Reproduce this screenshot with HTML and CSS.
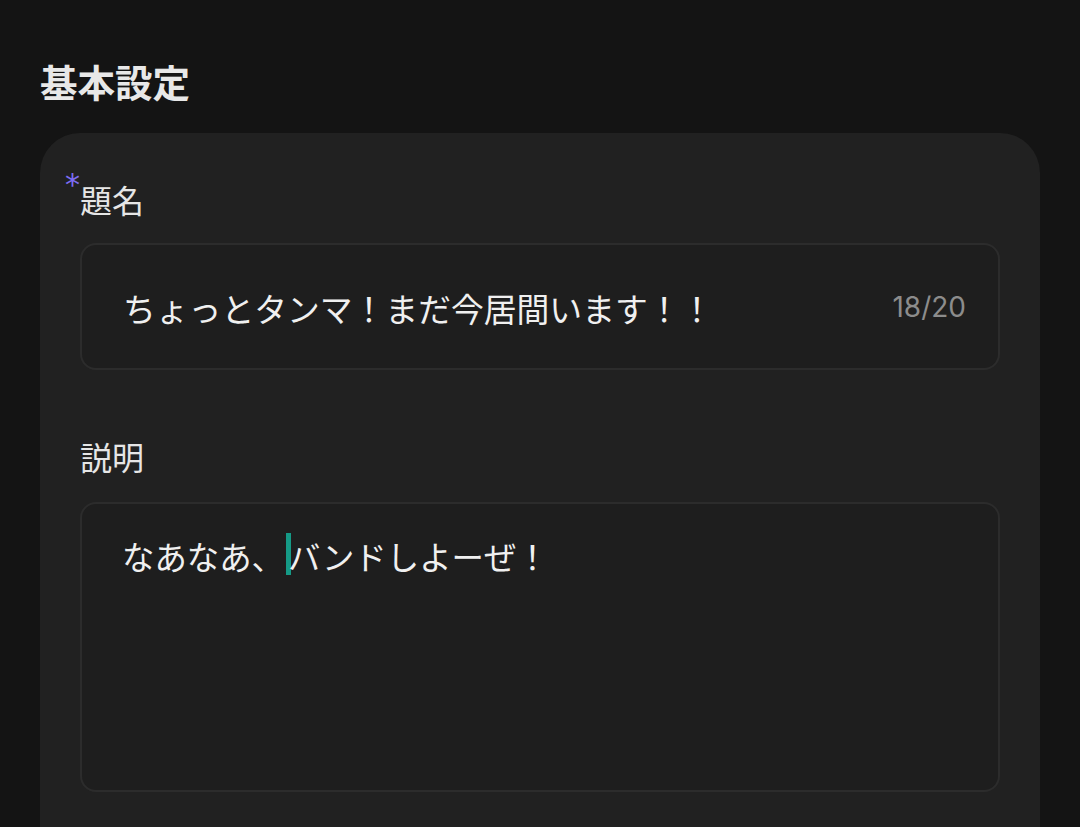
FILE: index.html
```html
<!DOCTYPE html>
<html lang="ja">
<head>
<meta charset="utf-8">
<link rel="stylesheet" href="styles.css">
</head>
<body>
<main class="page">
  <h1 class="section-title">基本設定</h1>
  <section class="card">
    <div class="field">
      <label class="label"><span class="required">*</span>題名</label>
      <div class="input">
        <span class="input-text">ちょっとタンマ！まだ今居間います！！</span>
        <span class="counter">18/20</span>
      </div>
    </div>
    <div class="field field-desc">
      <label class="label">説明</label>
      <div class="textarea">
        <span class="textarea-text">なあなあ、<span class="caret"></span>バンドしよーぜ！</span>
      </div>
    </div>
  </section>
</main>
</body>
</html>
```

FILE: styles.css
```css
* { box-sizing: border-box; }
html, body {
  margin: 0;
  padding: 0;
  background: #141414;
  height: 100%;
  overflow: hidden;
}
body {
  font-family: "Noto Sans CJK JP", "Noto Sans", sans-serif;
  color: #ececec;
}
.page {
  padding: 55px 40px 0;
}
.section-title {
  margin: 0;
  font-size: 37.5px;
  line-height: 52px;
  font-weight: 700;
  color: #e8e8e8;
}
.card {
  margin-top: 26px;
  background: #212121;
  border-radius: 40px 40px 0 0;
  padding: 44px 40px 40px;
  height: 720px;
}
.field {
  display: flex;
  flex-direction: column;
  gap: 22px;
}
.field-desc {
  margin-top: 64px;
}
.field-desc .label {
  margin-bottom: 2px;
}
.label {
  position: relative;
  font-size: 32px;
  line-height: 44px;
  color: #e6e6e6;
}
.required {
  position: absolute;
  left: -15px;
  top: -4px;
  font-size: 30px;
  line-height: 24px;
  color: #7d6cf2;
  font-family: "DejaVu Sans", sans-serif;
}
.input {
  height: 127px;
  border: 2px solid #2c2c2c;
  border-radius: 16px;
  background: #1e1e1e;
  display: flex;
  align-items: center;
  justify-content: space-between;
  padding: 0 32px 0 41px;
}
.input-text {
  font-size: 32.8px;
  line-height: 48px;
  color: #f0f0f0;
  position: relative;
  top: 1px;
}
.counter {
  font-family: "Inter", "Roboto", sans-serif;
  font-size: 28px;
  color: #8c8c8c;
}
.textarea {
  height: 290px;
  border: 2px solid #2c2c2c;
  border-radius: 16px;
  background: #1e1e1e;
  padding: 28px 40px;
}
.textarea-text {
  font-size: 32.4px;
  line-height: 48px;
  color: #f0f0f0;
}
.caret {
  display: inline-block;
  width: 5px;
  height: 42px;
  margin: 0 -3px 0 2px;
  vertical-align: -5px;
  background: #159a86;
}
```
